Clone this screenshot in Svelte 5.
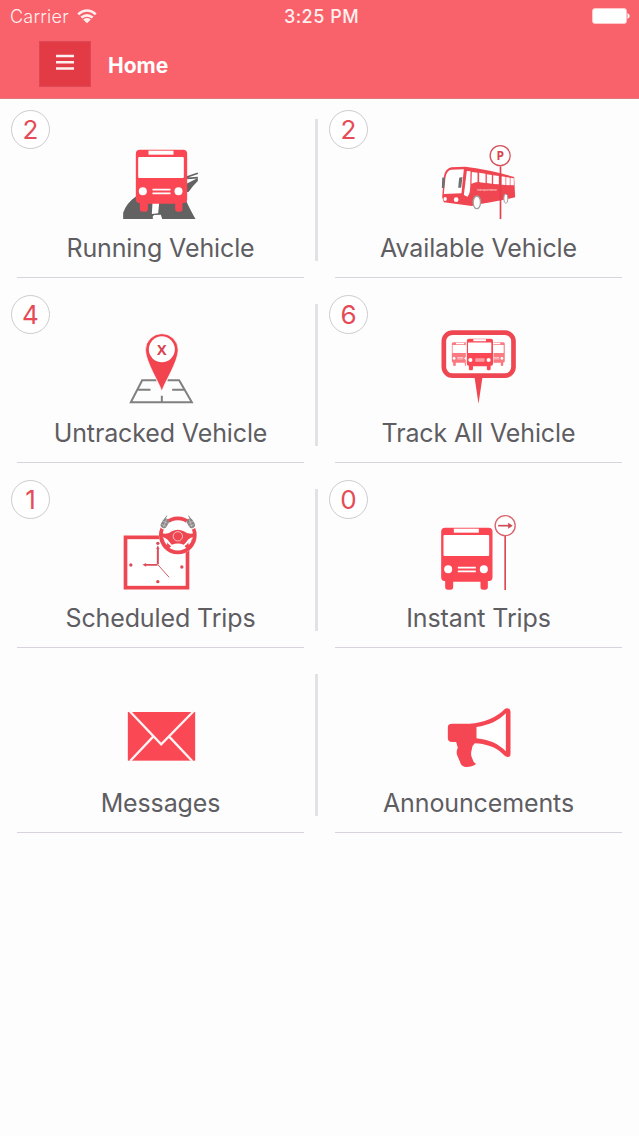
<script lang="ts">
	type Tile = { icon: string; label: string; count?: number; box: string };

	const rows: Tile[][] = [
		[
			{ icon: 'running', label: 'Running Vehicle', count: 2, box: '3.5 0 300 285' },
			{ icon: 'available', label: 'Available Vehicle', count: 2, box: '-2.5 0 300 285' }
		],
		[
			{ icon: 'untracked', label: 'Untracked Vehicle', count: 4, box: '-11.5 1 300 285' },
			{ icon: 'trackAll', label: 'Track All Vehicle', count: 6, box: '-2.5 1 300 285' }
		],
		[
			{ icon: 'scheduled', label: 'Scheduled Trips', count: 1, box: '3.5 0 300 285' },
			{ icon: 'instant', label: 'Instant Trips', count: 0, box: '-2.5 0 300 285' }
		],
		[
			{ icon: 'messages', label: 'Messages', box: '3.5 -15 300 285' },
			{ icon: 'announcements', label: 'Announcements', box: '-2.5 -15 300 285' }
		]
	];
</script>

{#snippet bus()}
	<path fill="#fa4753" d="M12 0H142Q154 0 154 12V148Q154 160 144 160H140V178Q140 186 132 186H126Q118 186 118 178V162H36V178Q36 186 28 186H20Q12 186 12 178V160H10Q0 160 0 148V12Q0 0 12 0Z" />
	<rect x="38" y="3" width="75" height="12" fill="#fff" />
	<rect x="7" y="22" width="137" height="63" rx="3" fill="#fff" />
	<circle cx="21" cy="125" r="12" fill="#fff" />
	<circle cx="128" cy="125" r="12" fill="#fff" />
	<path stroke="#fff" stroke-width="5" d="M50 120H104M50 131H104" />
{/snippet}

{#snippet picture(name: string)}
	{#if name === 'running'}
		<path fill="#626262" d="M40 252V233Q49 205 77 185H225Q228 200 257 252H157L153 239 131 240 134 252Z" />
		<path fill="#fff" d="M128 203H148L145 235 126 237Z" />
		<path fill="#fff" d="M129 243L150 240 157 253H129Z" />
		<path fill="#626262" d="M230 171V146L264 129V138Q248 153 236 171Z" />
		<path stroke="#626262" stroke-width="5" fill="none" d="M231 126L264 115M232 130L264 128" />
		<g transform="translate(78 44)">{@render bus()}</g>
	{:else if name === 'available'}
		<path fill="#ef4652" d="M42 125Q45 102 64 97L107 95Q190 106 253 126L256 187Q224 195 151 207L126 213 42 202 37 187Z" />
		<path fill="#fff" d="M47 127Q50 107 64 104L102 103 95 175 42 177ZM111 108L122 109 121 172 113 185 102 180ZM126 111L143 113V142L125 146ZM148 113L167 116V144L148 142ZM171 118L186 120V146L171 144ZM190 121L207 123V148L190 147ZM215 124L252 130V151L215 149Z" />
		<path fill="none" stroke="#ef4652" stroke-width="2" d="M228 124V151M241 127V151" />
		<path fill="#ef4652" d="M119 176Q121 150 132 143L150 141V190H119Z" />
		<ellipse cx="141" cy="202" rx="11" ry="19" fill="#fff" stroke="#a3a0a0" stroke-width="4" />
		<ellipse cx="228" cy="191" rx="6" ry="14" fill="#fff" stroke="#a3a0a0" stroke-width="3" />
		<path fill="#717171" d="M37 128L46 127 43 159H36ZM88 128L98 126 94 158H85Z" />
		<ellipse cx="46" cy="192" rx="5" ry="6" fill="#fff" />
		<ellipse cx="79" cy="194" rx="7" ry="7" fill="#fff" />
		<text x="172" y="169" class="maker">transportation</text>
		<path stroke="#e0414c" stroke-width="5" d="M212 94V252" />
		<circle cx="211" cy="62" r="30" fill="#fff" stroke="#d4535b" stroke-width="4" />
		<text x="211" y="75" class="sign parking">P</text>
	{:else if name === 'untracked'}
		<path fill="none" stroke="#808080" stroke-width="6" d="M125 182H82L48 248H231L193 182H158M70 210H107M172 210H210M141 228V248" />
		<path fill="#f2444f" stroke="#fff" stroke-width="2" d="M141 215C132 186 93 128 92 91A49 49 0 0 1 190 91C189 128 150 186 141 215Z" />
		<circle cx="141" cy="89" r="39" fill="#fff" />
		<text x="141" y="105" class="sign cross">X</text>
	{:else if name === 'trackAll'}
		<rect x="42" y="39" width="209" height="129" rx="26" fill="#fff" stroke="#ee4752" stroke-width="14" />
		<path fill="#ee4752" d="M134 172H158L146 252Z" />
		<g opacity=".72">
			<g transform="translate(66 68) scale(.33 .38)">{@render bus()}</g>
			<g transform="translate(174 68) scale(.33 .38)">{@render bus()}</g>
		</g>
		<rect x="108" y="57" width="83" height="84" fill="#fff" />
		<g transform="translate(111 57) scale(.51)">{@render bus()}</g>
	{:else if name === 'scheduled'}
		<rect x="47" y="97" width="186" height="151" fill="#fff" stroke="#ee4752" stroke-width="11" />
		<g fill="#dc4b56">
			<circle cx="144" cy="115" r="5" />
			<circle cx="63" cy="180" r="5" />
			<circle cx="216" cy="186" r="5" />
			<circle cx="144" cy="230" r="5" />
			<path d="M144 121L149 132H147V178H141V132H139ZM98 179L109 174V177H143V182H109V185Z" />
		</g>
		<path stroke="#d85b64" stroke-width="3" d="M144 179L178 217" />
		<circle cx="204" cy="91" r="57" fill="#fff" />
		<circle cx="204" cy="91" r="51" fill="none" stroke="#ee4752" stroke-width="11" />
		<path fill="#ee4752" d="M154 84Q174 90 186 79Q204 70 222 79Q236 90 254 84L252 96Q238 98 230 110L222 119Q204 112 186 119L178 110Q170 98 155 96Z" />
		<circle cx="204" cy="94" r="14" fill="none" stroke="#ffd5d7" stroke-width="2.5" />
		<path fill="#ee4752" d="M160 98Q168 104 176 117L184 124 176 131 160 115ZM248 98Q240 104 232 117L224 124 232 131 248 115Z" />
		<path fill="#fff" d="M161 98Q172 101 173 113L171 120Q163 113 161 98ZM247 98Q236 101 235 113L237 120Q245 113 247 98Z" />
		<path stroke="#fff" stroke-width="23" stroke-linecap="round" d="M167 54L162 61M241 54L247 61" />
		<path stroke="#8a8585" stroke-width="19" stroke-linecap="round" d="M168 50L162 60M240 50L246 60" />
		<path stroke="#8a8585" stroke-width="3" d="M165 42L171 32M242 42L236 32" />
		<path stroke="#d5cccc" stroke-width="2" d="M158 48L173 55M155 58L170 64M236 55L251 48M238 64L254 58M170 43L161 67M238 43L247 67" />
	{:else if name === 'instant'}
		<g transform="translate(34 68)">{@render bus()}</g>
		<path stroke="#dd4853" stroke-width="5" d="M226 93V255" />
		<circle cx="226" cy="62" r="30" fill="#fff" stroke="#d9646c" stroke-width="4" />
		<path fill="none" stroke="#cf4c56" stroke-width="5" d="M205 62H240" />
		<path fill="#cf4c56" d="M235 53L249 62 235 71Z" />
	{:else if name === 'messages'}
		<rect x="54" y="51" width="202" height="146" fill="#fa4954" />
		<path fill="none" stroke="#fff3f3" stroke-width="7" d="M59 48L154 148 252 48M61 198L130 125M247 198L178 125" />
	{:else}
		<path fill="#f54753" d="M66 86H119C160 85 201 67 224 43Q230 37 238 41 242 44 242 50V176Q242 187 232 186 226 185 219 177C195 154 166 147 135 145Q126 152 126 163 121 180 127 190 129 201 139 207 126 217 106 216 93 213 91 202L82 181Q78 169 84 158L79 141H67Q54 141 54 130V97Q54 86 66 86Z" />
		<path fill="#fff" d="M140 96C178 91 207 77 228 55V169C205 146 178 134 140 130Z" />
	{/if}
{/snippet}

<div class="screen">
	<header>
		<div class="status">
			<div class="carrier">
				<span>Carrier</span>
				<svg width="20" height="15" viewBox="0 0 20 15">
					<path fill="none" stroke="#fff0ef" stroke-width="2.6" d="M1.2 5.2Q10-2.2 18.8 5.2M4.3 8.6Q10 4 15.7 8.6" />
					<path fill="#fff0ef" d="M6.2 10.5Q10 7.7 13.8 10.5L10 14.3Z" />
				</svg>
			</div>
			<span class="time">3:25 PM</span>
			<svg class="battery" width="38" height="16" viewBox="0 0 38 16">
				<rect x=".5" y=".5" width="34" height="15" rx="2.5" fill="#fff" stroke="#ffc9cb" />
				<path fill="#fff" d="M35.5 5Q40 8 35.5 11Z" />
			</svg>
		</div>
		<div class="toolbar">
			<button aria-label="Menu">
				<svg width="18" height="17" viewBox="0 0 18 17">
					<path stroke="#fff0ef" stroke-width="2.6" d="M0 2H18M0 8.2H18M0 14.5H18" />
				</svg>
			</button>
			<h1>Home</h1>
		</div>
	</header>

	<main>
		{#each rows as row}
			<div class="row">
				{#each row as tile, i}
					{#if i > 0}<div class="divider"></div>{/if}
					<div class="tile">
						{#if tile.count !== undefined}<span class="badge">{tile.count}</span>{/if}
						<svg class="icon" width="100" height="95" viewBox={tile.box}>
							{@render picture(tile.icon)}
						</svg>
						<span class="label">{tile.label}</span>
					</div>
				{/each}
			</div>
		{/each}
	</main>
</div>

<style>
	:global(body) {
		background: #fefdfe;
	}
	.screen {
		width: 639px;
		min-height: 1136px;
		font-family: Inter, 'Liberation Sans', sans-serif;
	}
	header {
		box-sizing: border-box;
		height: 99px;
		background: #f9626b;
		border-bottom: 1px solid #df777d;
		color: #fff0ef;
	}
	.status {
		display: grid;
		grid-template-columns: 1fr auto 1fr;
		align-items: center;
		height: 32px;
		padding: 0 9px 0 10px;
		font-size: 18px;
	}
	.carrier {
		display: flex;
		align-items: center;
		gap: 8px;
		font-weight: 300;
		letter-spacing: 0.2px;
	}
	.time {
		padding-left: 3px;
		font-weight: 500;
		letter-spacing: 0.5px;
	}
	.battery {
		justify-self: end;
	}
	.toolbar {
		display: flex;
		align-items: center;
		padding: 9px 0 0 39px;
	}
	button {
		display: flex;
		justify-content: center;
		box-sizing: border-box;
		width: 52px;
		height: 46px;
		padding: 12px 0 0;
		border: 1px solid #dc4853;
		background: #e23b46;
	}
	h1 {
		margin: 3px 0 0 17px;
		color: #fff;
		font-size: 21px;
		font-weight: 700;
	}
	.row {
		display: flex;
		height: 185px;
		padding-left: 17px;
	}
	.tile {
		position: relative;
		display: flex;
		flex-direction: column;
		align-items: center;
		box-sizing: border-box;
		width: 287px;
		height: 179px;
		padding-top: 36px;
		border-bottom: 1px solid #d8d3dc;
	}
	.divider {
		width: 3px;
		height: 142px;
		margin: 20px 17px 0 11px;
		background: #e3e0e6;
	}
	.badge {
		position: absolute;
		top: 11px;
		left: -6px;
		box-sizing: border-box;
		width: 39px;
		height: 39px;
		border: 1px solid #cdcbd0;
		border-radius: 50%;
		background: #fff;
		color: #e54b57;
		font-size: 26px;
		line-height: 37px;
		text-align: center;
	}
	.icon {
		display: block;
		flex-shrink: 0;
	}
	.label {
		color: #5e5d62;
		font-size: 25px;
		letter-spacing: -0.12px;
		line-height: 37px;
		white-space: nowrap;
	}
	.sign {
		font-family: 'Open Sans', sans-serif;
		font-weight: 700;
		text-anchor: middle;
		fill: #d9434e;
	}
	.parking {
		font-size: 36px;
	}
	.cross {
		font-size: 43px;
	}
	.maker {
		font-size: 9px;
		text-anchor: middle;
		fill: #ffe0e0;
	}
</style>
